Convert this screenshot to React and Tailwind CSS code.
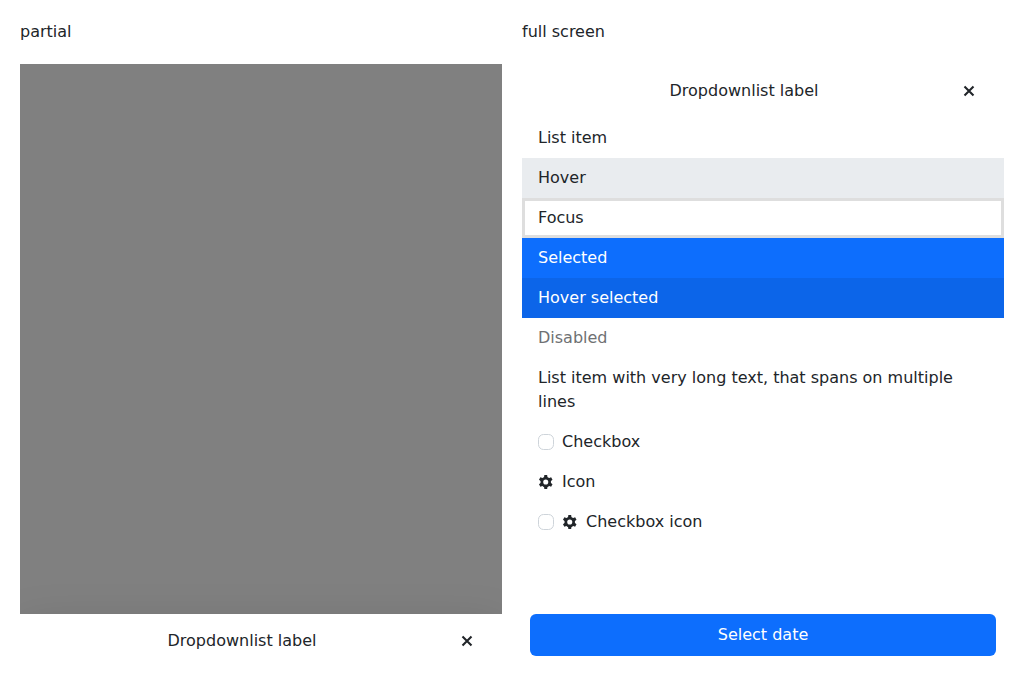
const TOOTH_ANGLES = [0, 60, 120];

function CloseIcon() {
  return (
    <svg className="size-4 fill-none stroke-current" viewBox="0 0 16 16" aria-hidden="true">
      <path d="m3.500 3.500 9 9m0-9-9 9" strokeWidth="2.1" />
    </svg>
  );
}

function GearIcon() {
  return (
    <svg className="size-4 shrink-0 fill-current" viewBox="0 0 16 16" aria-hidden="true">
      <circle cx="7.750" cy="8" r="3.900" fill="none" stroke="currentColor" strokeWidth="2.700" />
      {TOOTH_ANGLES.map((angle) => (
        <path
          key={angle}
          transform={`rotate(${angle} 7.75 8)`}
          d="M6.350 1h2.800l.4 2.700h-3.600zM5.950 12.300h3.600L9.150 15h-2.800z"
        />
      ))}
    </svg>
  );
}

function Checkbox() {
  return <span className="size-4 shrink-0 rounded-[5.5px] border border-[#ced4da] bg-white" />;
}

function SheetHeader() {
  return (
    <div className="flex shrink-0 items-center px-4 py-2">
      <div className="flex-1 text-center">Dropdownlist label</div>
      <button className="flex size-[38px] items-center justify-center" aria-label="Close">
        <CloseIcon />
      </button>
    </div>
  );
}

function ListItem({ className = "", children }) {
  return <li className={`flex items-center gap-2 px-4 py-2 ${className}`}>{children}</li>;
}

export default function App() {
  return (
    <main className="grid grid-cols-2 gap-x-5 p-5 font-['DejaVu_Sans',sans-serif] text-base leading-6 text-[#212529]">
      <section className="flex flex-col gap-5">
        <h2>partial</h2>
        <div className="flex h-[600px] flex-col overflow-hidden bg-[#808080]">
          <div className="mt-[550px] shrink-0 bg-white shadow-[0_16px_48px_rgba(0,0,0,0.175)]">
            <SheetHeader />
          </div>
        </div>
      </section>
      <section className="flex flex-col gap-5">
        <h2>full screen</h2>
        <div className="flex h-[600px] flex-col bg-white">
          <SheetHeader />
          <ul className="flex-1">
            <ListItem>List item</ListItem>
            <ListItem className="bg-[#e9ecef]">Hover</ListItem>
            <ListItem className="inset-ring-3 inset-ring-[#dedede]">Focus</ListItem>
            <ListItem className="bg-[#0d6efd] text-white">Selected</ListItem>
            <ListItem className="bg-[#0c65e9] text-white">Hover selected</ListItem>
            <ListItem className="text-[#6f7173]">Disabled</ListItem>
            <ListItem>List item with very long text, that spans on multiple lines</ListItem>
            <ListItem>
              <Checkbox />
              Checkbox
            </ListItem>
            <ListItem>
              <GearIcon />
              Icon
            </ListItem>
            <ListItem>
              <Checkbox />
              <GearIcon />
              Checkbox icon
            </ListItem>
          </ul>
          <div className="p-2">
            <button className="flex h-[42px] w-full items-center justify-center rounded-md bg-[#0d6efd] text-white">
              Select date
            </button>
          </div>
        </div>
      </section>
    </main>
  );
}
